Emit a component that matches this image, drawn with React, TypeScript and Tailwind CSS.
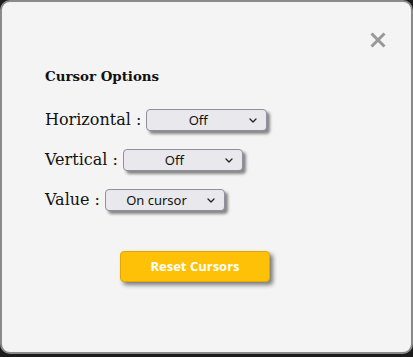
import React from 'react';

function Chevron() {
  return (
    <svg width="8" height="5" viewBox="0 0 8 5" className="shrink-0">
      <path d="M1 1 L4 4 L7 1" fill="none" stroke="#222" strokeWidth="1.3" strokeLinecap="round" strokeLinejoin="round" />
    </svg>
  );
}

function FakeSelect({ value, width }: { value: string; width: string }) {
  return (
    <button
      type="button"
      className={`flex h-[22px] ${width} items-center rounded-[4px] border border-[#8f8f9d] bg-[#e9e9ed] pr-[9px] text-[13px] text-[#111] shadow-[3px_3px_3px_rgba(0,0,0,0.45)] [font-family:'Noto_Sans',sans-serif]`}
    >
      <span className="flex-1 text-center leading-none">{value}</span>
      <Chevron />
    </button>
  );
}

export default function App() {
  const rows = [
    { label: 'Horizontal :', value: 'Off', width: 'w-[121px]' },
    { label: 'Vertical :', value: 'Off', width: 'w-[120px]' },
    { label: 'Value :', value: 'On cursor', width: 'w-[120px]' },
  ];

  return (
    <div className="h-[357px] w-[413px] bg-[#1c1c1c]">
      <div className="h-[354px] rounded-[10px] border-2 border-[#8a8a8a] bg-[#f4f4f4] pl-[43px] pr-[24px] pt-[29px] [font-family:'DejaVu_Serif',serif]">
        {/* close */}
        <div className="flex justify-end">
          <svg width="18" height="18" viewBox="0 0 18 18">
            <path d="M2.5 2.5 L15.5 15.5 M15.5 2.5 L2.5 15.5" stroke="#999" strokeWidth="3" strokeLinecap="butt" />
          </svg>
        </div>

        <h2 className="mt-[19px] text-[13.4px] font-bold leading-[16px] text-[#111]">Cursor Options</h2>

        <div className="mt-[25px] flex flex-col gap-[18px]">
          {rows.map((r) => (
            <div key={r.label} className="flex h-[22px] items-center gap-[5px]">
              <span className="text-[16px] leading-[20px] text-[#111]">{r.label}</span>
              <FakeSelect value={r.value} width={r.width} />
            </div>
          ))}
        </div>

        <button
          type="button"
          className="ml-[75px] mt-[40px] flex h-[31px] w-[150px] items-center justify-center rounded-[4px] border border-[#e0a800] bg-[#ffc107] text-[13px] font-bold text-white shadow-[3px_3px_4px_rgba(0,0,0,0.5)] [font-family:'Open_Sans',sans-serif]"
        >
          Reset Cursors
        </button>
      </div>
    </div>
  );
}
